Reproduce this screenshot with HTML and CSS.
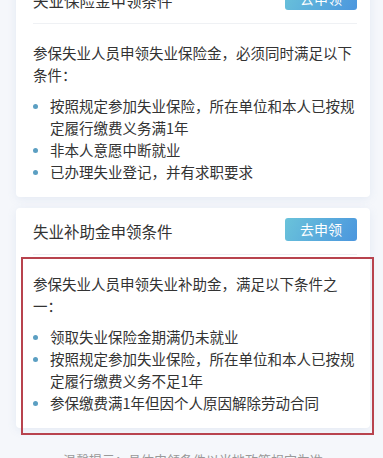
FILE: index.html
```html
<!DOCTYPE html>
<html lang="zh-CN">
<head>
  <meta charset="UTF-8">
  <meta name="viewport" content="width=device-width, initial-scale=1.0">
  <title>申领条件</title>
  <link rel="stylesheet" href="styles.css">
</head>
<body>
  <div class="page">
    <!-- 失业保险金 -->
    <div class="card">
      <div class="card-head">
        <h2>失业保险金申领条件</h2>
        <button class="btn">去申领</button>
      </div>
      <div class="card-body">
        <p>参保失业人员申领失业保险金，必须同时满足以下条件：</p>
        <ul>
          <li>按照规定参加失业保险，所在单位和本人已按规定履行缴费义务满1年</li>
          <li>非本人意愿中断就业</li>
          <li>已办理失业登记，并有求职要求</li>
        </ul>
      </div>
    </div>

    <!-- 失业补助金 -->
    <div class="card">
      <div class="card-head">
        <h2>失业补助金申领条件</h2>
        <button class="btn">去申领</button>
      </div>
      <div class="card-body">
        <p>参保失业人员申领失业补助金，满足以下条件之一：</p>
        <ul>
          <li>领取失业保险金期满仍未就业</li>
          <li>按照规定参加失业保险，所在单位和本人已按规定履行缴费义务不足1年</li>
          <li>参保缴费满1年但因个人原因解除劳动合同</li>
        </ul>
      </div>
      <div class="mark"></div>
    </div>

    <p class="tip">温馨提示：具体申领条件以当地政策规定为准</p>
  </div>
</body>
</html>
```

FILE: styles.css
```css
* {
  margin: 0;
  padding: 0;
  box-sizing: border-box;
  font-family: "Noto Sans CJK SC", "Noto Sans", sans-serif;
}

body {
  background: #f5f7fb;
  color: #333;
  height: 100vh;
  overflow: hidden;
}

.page {
  margin-top: -23px;
  padding: 0 13px 0 16px;
}

.card {
  position: relative;
  background: #fff;
  border-radius: 4px;
  box-shadow: 0 2px 10px rgba(110, 140, 190, 0.12);
  padding: 0 13px 14px 17px;
  margin-bottom: 11px;
}

.card-head {
  display: flex;
  justify-content: space-between;
  align-items: center;
  height: 47px;
  padding: 10px 0 14px;
  border-bottom: 1px solid #eff1f4;
}

.card-head h2 {
  font-size: 15.5px;
  font-weight: 400;
  color: #333;
  line-height: 23px;
  margin-top: 4px;
}

.btn {
  width: 72px;
  height: 23px;
  border: none;
  border-radius: 3px;
  background: linear-gradient(120deg, #6ac3da, #4b96de);
  color: #fff;
  font-size: 14px;
  line-height: 23px;
}

.card-body {
  padding-top: 18px;
  font-size: 14.5px;
  line-height: 22px;
}

.card-body p {
  margin-bottom: 9px;
}

.card-body ul {
  list-style: none;
}

.card-body li {
  position: relative;
  padding-left: 17px;
}

.card-body li::before {
  content: "";
  position: absolute;
  left: 0;
  top: 9px;
  width: 5px;
  height: 5px;
  border-radius: 50%;
  background: #5b9fc2;
}

/* red annotation frame */
.mark {
  position: absolute;
  top: 49px;
  left: 5px;
  right: -4px;
  bottom: -7px;
  border: 2px solid #b8434e;
  pointer-events: none;
}

.tip {
  margin-top: 22px;
  text-align: center;
  font-size: 13px;
  line-height: 20px;
  color: #999;
}
```
